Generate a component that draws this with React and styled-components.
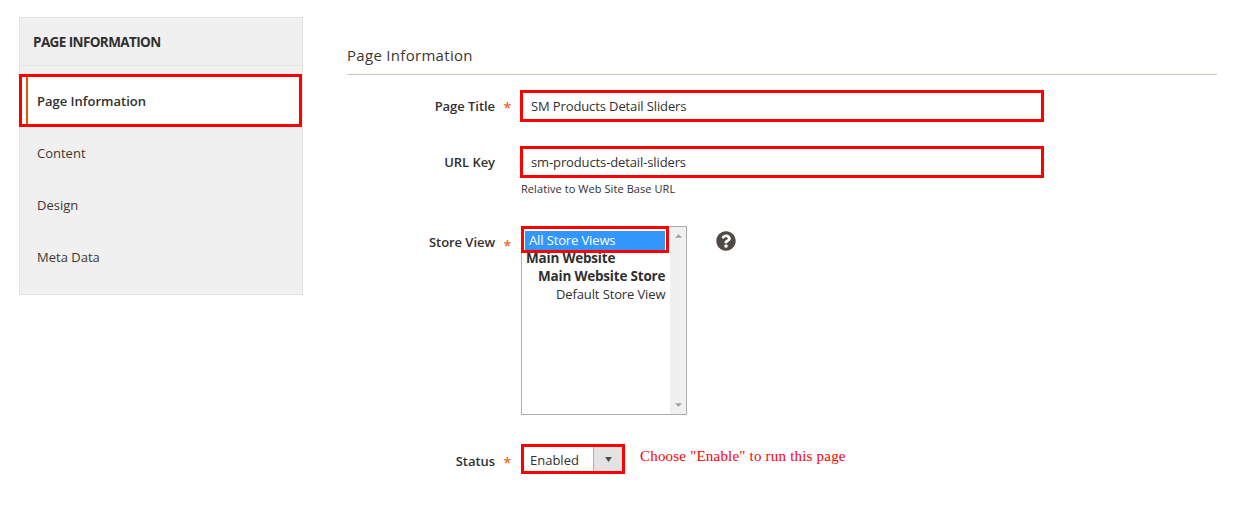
import React from "react";
import styled, { createGlobalStyle } from "styled-components";
import { FaQuestionCircle } from "react-icons/fa";

const Global = createGlobalStyle`
  html, body { margin: 0; padding: 0; background: #fff; }
  body { font-family: "Open Sans", "Liberation Sans", sans-serif; color: #303030; }
`;
const Page = styled.div`
  display: flex; align-items: flex-start; width: 1244px; height: 509px;
  padding: 17px 0 0 19px; box-sizing: border-box; overflow: hidden;
`;
const Sidebar = styled.aside`
  width: 284px; height: 278px; box-sizing: border-box; background: #f0f0f0;
  border: 1px solid #e3e3e3; flex: none;
`;
const SideTitle = styled.div`
  height: 48px; box-sizing: border-box; border-bottom: 1px solid #e3e3e3;
  padding-left: 13px; font-size: 13.5px; font-weight: 700; line-height: 48px;
  color: #303030; letter-spacing: -0.6px;
`;
const NavList = styled.nav`
  display: flex; flex-direction: column; margin: 8px 0 0 -1px;
`;
const NavItem = styled.div`
  height: ${p => (p.$active ? "53px" : "52px")}; box-sizing: border-box;
  display: flex; align-items: center; font-size: 13px; color: #41362f;
  padding-left: ${p => (p.$active ? "4px" : "18px")};
  ${p => p.$active && `
    background: #fff; border: 3px solid #f00; width: 283px; color: #303030; font-weight: 600;
    letter-spacing: 0;
  `}
`;
const ActiveMark = styled.span`
  width: 2px; align-self: stretch; background: #eb5202; margin-right: 9px;
`;
const Main = styled.main`
  margin-left: 44px; width: 870px; flex: none;
`;
const Heading = styled.h2`
  margin: 0; height: 58px; box-sizing: border-box; padding-top: 26px;
  font-size: 15px; font-weight: 400; line-height: 24px; color: #41362f;
  border-bottom: 1px solid #cac3b4; letter-spacing: 0.3px;
`;
const Row = styled.div`
  display: flex; align-items: ${p => p.$align || "center"}; margin-top: ${p => p.$top}px;
`;
const Label = styled.label`
  width: 148px; text-align: right; font-size: 13px; font-weight: 600; color: #303030; flex: none;
  line-height: 18px; position: relative; top: ${p => p.$shift || 0}px; letter-spacing: -0.05px;
`;
const Required = styled.span`
  width: 25px; flex: none; text-align: center; color: #eb5202; font-size: 15px; font-weight: 400;
  line-height: 18px; position: relative; top: ${p => p.$shift || 0}px;
`;
const Gap = styled.span`
  width: 25px; flex: none;
`;
const TextField = styled.div`
  width: 524px; height: 32px; box-sizing: border-box; border: 3px solid #f00; background: #fff;
  padding-left: 8px; display: flex; align-items: center;
  font-size: 13px; color: #303030; letter-spacing: -0.12px;
`;
const Note = styled.div`
  margin: 4px 0 0 174px; font-size: 11px; line-height: 14px; color: #303030; letter-spacing: 0.07px;
`;
const ListBox = styled.div`
  position: relative; width: 166px; height: 189px; box-sizing: border-box; margin-left: 1px;
  border: 1px solid #adadad; background: #fff; display: flex; flex: none; font-size: 13px;
`;
const Options = styled.div`
  flex: 1; min-width: 0; padding-top: 22px;
`;
const Option = styled.div`
  height: 18px; line-height: 18px; white-space: nowrap;
  padding-left: ${p => p.$indent}px; font-weight: ${p => (p.$bold ? 700 : 400)};
  font-size: ${p => (p.$bold ? "13.5px" : "13px")}; color: #303030;
  letter-spacing: ${p => (p.$bold ? "-0.2px" : "-0.12px")};
`;
const SelectedFrame = styled.div`
  position: absolute; left: -1px; top: -1px; width: 148px; height: 27px; box-sizing: border-box;
  border: 3px solid #f00; background: #fff; padding: 2px 1px 1px 1px;
`;
const SelectedOption = styled.div`
  height: 19px; background: #3297fd; color: #fff; font-size: 13px; line-height: 19px; padding-left: 4px;
  letter-spacing: -0.13px;
`;
const Scrollbar = styled.div`
  width: 16px; flex: none; background: #f0f0f0; display: flex; flex-direction: column;
  justify-content: space-between; align-items: center; padding: 7px 0; box-sizing: border-box;
`;
const ScrollArrow = styled.svg`
  width: 7px; height: 4px; display: block;
`;
const Help = styled.span`
  display: flex; margin: 5px 0 0 29px; color: #514943; font-size: 20px;
`;
const StatusSelect = styled.div`
  display: flex; width: 104px; height: 30px; box-sizing: border-box; margin-left: 1px;
  border: 3px solid #f00; background: #fff; font-size: 13px; color: #303030; flex: none;
`;
const StatusValue = styled.div`
  flex: 1; padding-left: 6px; line-height: 26px;
`;
const StatusButton = styled.div`
  width: 29px; background: #e3e3e3; border-left: 1px solid #adadad; display: flex;
  align-items: center; justify-content: center; box-sizing: border-box;
`;
const Hint = styled.div`
  margin-left: 15px; font-family: "Liberation Serif", serif; font-size: 15px; color: #f00;
  position: relative; top: -3px; letter-spacing: 0.2px;
`;

export default function App() {
  return (
    <Page>
      <Global />
      <Sidebar>
        <SideTitle>PAGE INFORMATION</SideTitle>
        <NavList>
          <NavItem $active><ActiveMark />Page Information</NavItem>
          <NavItem>Content</NavItem>
          <NavItem>Design</NavItem>
          <NavItem>Meta Data</NavItem>
        </NavList>
      </Sidebar>
      <Main>
        <Heading>Page Information</Heading>
        <Row $top={15}>
          <Label>Page Title</Label>
          <Required $shift={1}>*</Required>
          <TextField>SM Products Detail Sliders</TextField>
        </Row>
        <Row $top={24}>
          <Label>URL Key</Label>
          <Gap />
          <TextField>sm-products-detail-sliders</TextField>
        </Row>
        <Note>Relative to Web Site Base URL</Note>
        <Row $top={30} $align="flex-start">
          <Label $shift={7}>Store View</Label>
          <Required $shift={10}>*</Required>
          <ListBox>
            <SelectedFrame><SelectedOption>All Store Views</SelectedOption></SelectedFrame>
            <Options>
              <Option $bold $indent={4}>Main Website</Option>
              <Option $bold $indent={16}>Main Website Store</Option>
              <Option $indent={34}>Default Store View</Option>
            </Options>
            <Scrollbar>
              <ScrollArrow viewBox="0 0 8 4"><path d="M4 0L8 4H0Z" fill="#a0a0a0" /></ScrollArrow>
              <ScrollArrow viewBox="0 0 8 4"><path d="M0 0H8L4 4Z" fill="#a0a0a0" /></ScrollArrow>
            </Scrollbar>
          </ListBox>
          <Help><FaQuestionCircle /></Help>
        </Row>
        <Row $top={29}>
          <Label $shift={2}>Status</Label>
          <Required $shift={3}>*</Required>
          <StatusSelect>
            <StatusValue>Enabled</StatusValue>
            <StatusButton>
              <svg width="7" height="5" viewBox="0 0 8 6"><path d="M0 0H8L4 6Z" fill="#514943" /></svg>
            </StatusButton>
          </StatusSelect>
          <Hint>Choose "Enable" to run this page</Hint>
        </Row>
      </Main>
    </Page>
  );
}
